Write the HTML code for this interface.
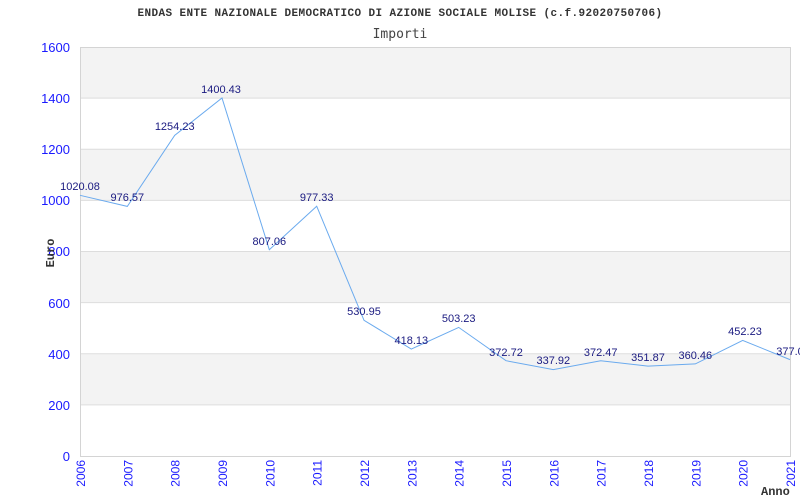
<!DOCTYPE html>
<html><head><meta charset="utf-8"><style>
html,body{margin:0;padding:0;background:#fff;width:800px;height:500px;overflow:hidden}
</style></head><body>
<svg width="800" height="500" xmlns="http://www.w3.org/2000/svg" font-family="Liberation Sans, sans-serif">
<rect width="800" height="500" fill="#fff"/>
<text x="400" y="16" text-anchor="middle" font-family="Liberation Mono, monospace" font-weight="bold" font-size="11" letter-spacing="0.4" fill="#333">ENDAS ENTE NAZIONALE DEMOCRATICO DI AZIONE SOCIALE MOLISE (c.f.92020750706)</text>
<text x="400" y="38" text-anchor="middle" font-family="DejaVu Sans Mono, monospace" font-size="13" fill="#444">Importi</text>
<g>
<rect x="80" y="47" width="710" height="51.1" fill="#f3f3f3"/>
<rect x="80" y="149.3" width="710" height="51.1" fill="#f3f3f3"/>
<rect x="80" y="251.5" width="710" height="51.1" fill="#f3f3f3"/>
<rect x="80" y="353.8" width="710" height="51.1" fill="#f3f3f3"/>
</g>
<g stroke="#ddd" stroke-width="1">
<line x1="80" y1="98.1" x2="790" y2="98.1"/>
<line x1="80" y1="149.3" x2="790" y2="149.3"/>
<line x1="80" y1="200.4" x2="790" y2="200.4"/>
<line x1="80" y1="251.5" x2="790" y2="251.5"/>
<line x1="80" y1="302.6" x2="790" y2="302.6"/>
<line x1="80" y1="353.8" x2="790" y2="353.8"/>
<line x1="80" y1="404.9" x2="790" y2="404.9"/>
</g>
<rect x="80.5" y="47.5" width="710" height="409" fill="none" stroke="#d4d4d4"/>
<g font-size="13" fill="#1a1aff" text-anchor="end">
<text x="70" y="52">1600</text><text x="70" y="103">1400</text><text x="70" y="154">1200</text><text x="70" y="205">1000</text><text x="70" y="256">800</text><text x="70" y="308">600</text><text x="70" y="359">400</text><text x="70" y="410">200</text><text x="70" y="461">0</text>
</g>
<polyline fill="none" stroke="#6aaaee" stroke-width="1" points="80,195.3 127.3,206.4 174.7,135.4 222,98 269.3,249.7 316.7,206.2 364,320.3 411.3,349.1 458.7,327.4 506,360.7 553.3,369.6 600.7,360.8 648,366.1 695.3,363.9 742.7,340.4 790,359.6"/>
<g font-size="11" fill="#1a1a80" text-anchor="middle">
<text x="80" y="190">1020.08</text><text x="127.3" y="201">976.57</text><text x="174.7" y="130">1254.23</text><text x="221" y="93">1400.43</text><text x="269.3" y="245">807.06</text><text x="316.7" y="201">977.33</text><text x="364" y="315">530.95</text><text x="411.3" y="344">418.13</text><text x="458.7" y="322">503.23</text><text x="506" y="356">372.72</text><text x="553.3" y="364">337.92</text><text x="600.7" y="356">372.47</text><text x="648" y="361">351.87</text><text x="695.3" y="359">360.46</text><text x="745" y="335">452.23</text><text x="790" y="355">377.0</text>
</g>
<g font-size="12" fill="#1a1aff" text-anchor="end">
<text transform="translate(85,460) rotate(-90)">2006</text>
<text transform="translate(132.3,460) rotate(-90)">2007</text>
<text transform="translate(179.7,460) rotate(-90)">2008</text>
<text transform="translate(227,460) rotate(-90)">2009</text>
<text transform="translate(274.3,460) rotate(-90)">2010</text>
<text transform="translate(321.7,460) rotate(-90)">2011</text>
<text transform="translate(369,460) rotate(-90)">2012</text>
<text transform="translate(416.3,460) rotate(-90)">2013</text>
<text transform="translate(463.7,460) rotate(-90)">2014</text>
<text transform="translate(511,460) rotate(-90)">2015</text>
<text transform="translate(558.3,460) rotate(-90)">2016</text>
<text transform="translate(605.7,460) rotate(-90)">2017</text>
<text transform="translate(653,460) rotate(-90)">2018</text>
<text transform="translate(700.3,460) rotate(-90)">2019</text>
<text transform="translate(747.7,460) rotate(-90)">2020</text>
<text transform="translate(795,460) rotate(-90)">2021</text>
</g>
<text transform="translate(54,253) rotate(-90)" text-anchor="middle" font-family="Liberation Mono, monospace" font-weight="bold" font-size="12" fill="#333">Euro</text>
<text x="761" y="495" font-family="Liberation Mono, monospace" font-weight="bold" font-size="12" fill="#333">Anno</text>
</svg>
</body></html>
